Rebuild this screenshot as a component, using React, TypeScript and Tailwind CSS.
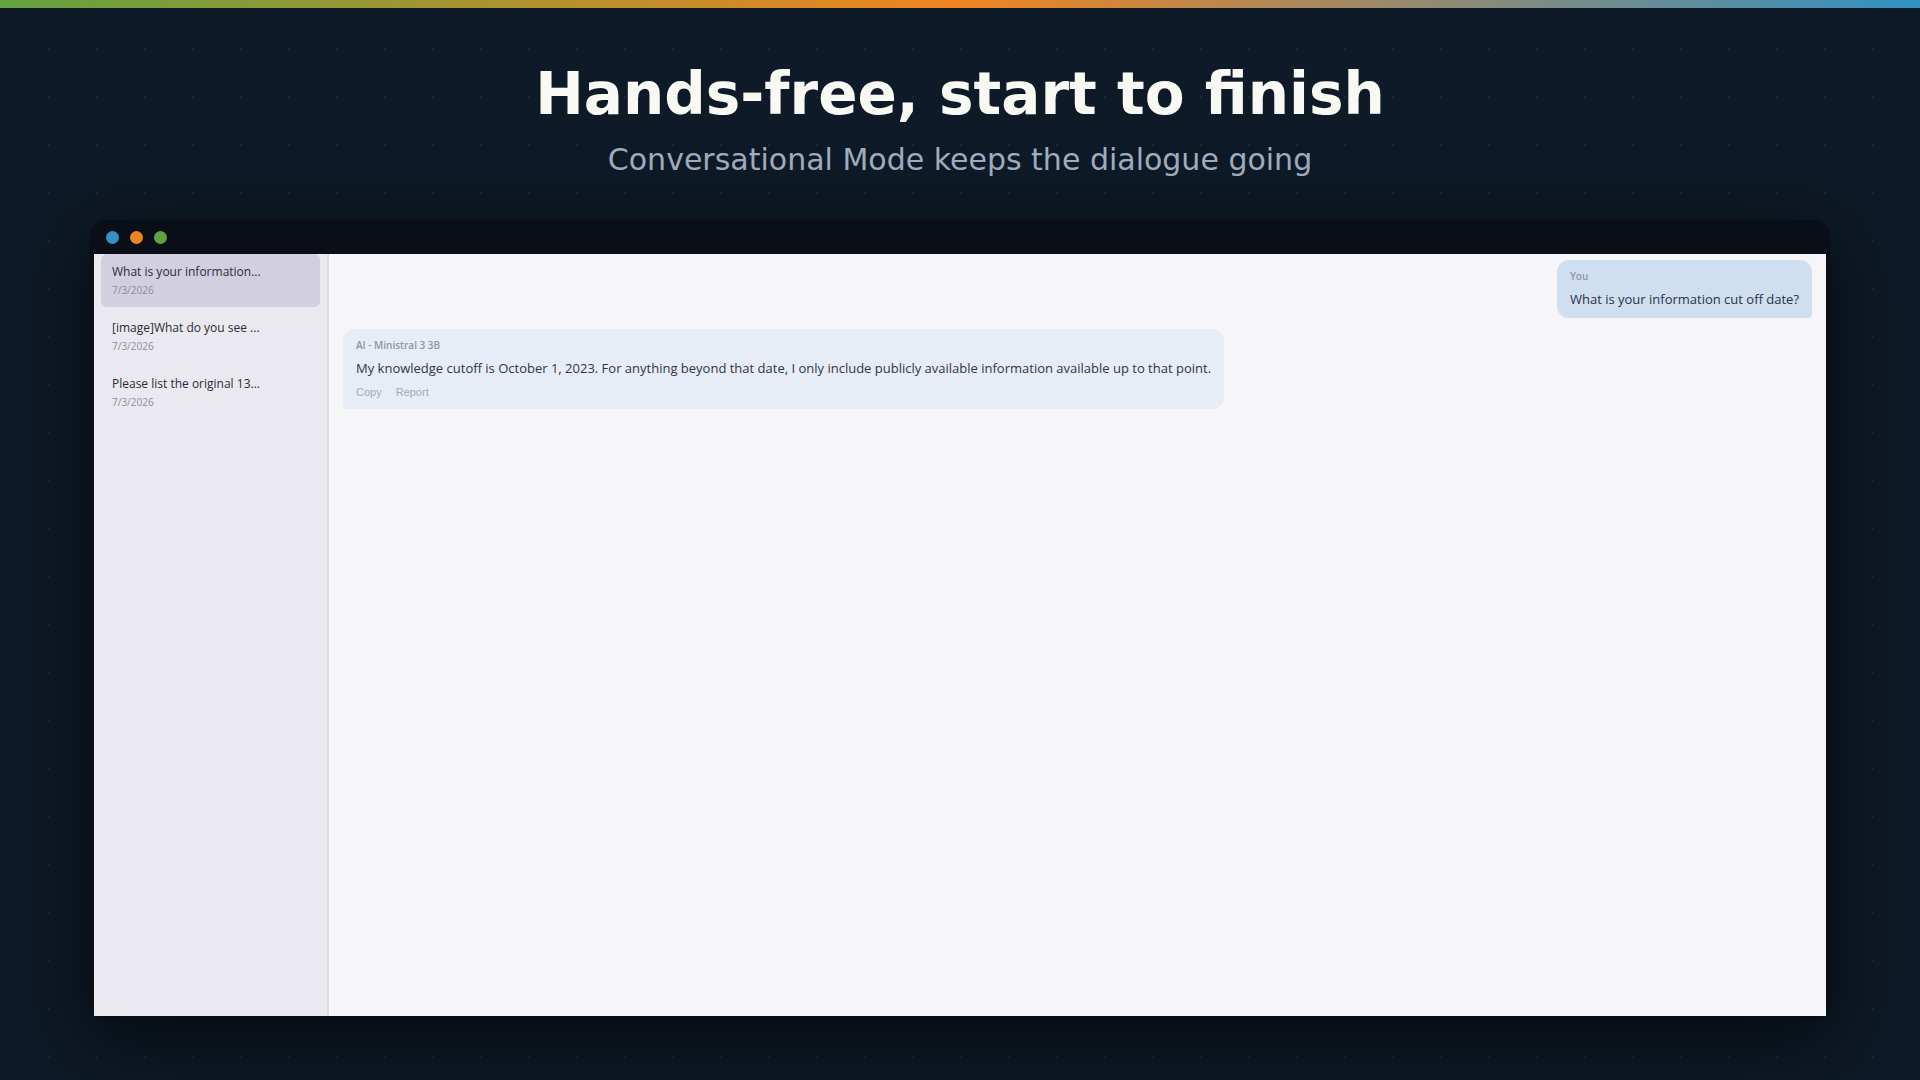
const chats = [
  { title: "What is your information...", date: "7/3/2026", active: true },
  { title: "[image]What do you see ...", date: "7/3/2026", active: false },
  { title: "Please list the original 13...", date: "7/3/2026", active: false },
];

function Sidebar() {
  return (
    <aside className="w-[235px] shrink-0 bg-[#eae9ef] border-r-2 border-[#dcdce4] px-[7px]">
      <nav className="flex flex-col gap-[3px]">
        {chats.map((chat) => (
          <button
            key={chat.title}
            className={`w-full text-left rounded-md px-[11px] pt-2 pb-[9px] ${
              chat.active ? "bg-[#d1cfe0]" : ""
            }`}
          >
            <span className="block text-[12px] leading-5 text-[#2b2b3c] truncate">
              {chat.title}
            </span>
            <span className="block text-[10px] leading-4 text-[#8d8c99]">
              {chat.date}
            </span>
          </button>
        ))}
      </nav>
    </aside>
  );
}

function Conversation() {
  return (
    <main className="flex-1 flex flex-col bg-[#f6f6f9] px-[14px] pt-[6px] gap-[11px]">
      <div className="self-end bg-[#d0dff0] rounded-xl rounded-br-sm px-[13px] py-2">
        <p className="text-[10px] leading-4 font-semibold text-[#8c96a8]">You</p>
        <p className="text-[13px] leading-[22px] text-[#28324a] mt-1">
          What is your information cut off date?
        </p>
      </div>

      <div className="self-start bg-[#e7edf6] rounded-xl rounded-bl-sm px-[13px] py-2">
        <p className="text-[10px] leading-4 font-semibold text-[#8f949f]">
          AI - Ministral 3 3B
        </p>
        <p className="text-[13px] leading-[22px] text-[#303542] mt-1">
          My knowledge cutoff is October 1, 2023. For anything beyond that date, I
          only include publicly available information available up to that point.
        </p>
        <div className="flex gap-[14px] mt-1 font-['Liberation_Sans',sans-serif] text-[11px] leading-[18px] text-[#a5a9b3]">
          <button>Copy</button>
          <button>Report</button>
        </div>
      </div>
    </main>
  );
}

export default function App() {
  return (
    <div className="relative min-h-screen flex flex-col bg-[#0e1a27]">
      {/* faint dot grid */}
      <div className="absolute top-12 left-12 right-0 bottom-0 bg-[radial-gradient(circle_at_1px_1px,#192733_1px,transparent_1px)] bg-size-[48px_48px]" />

      <div className="h-2 bg-linear-to-r/srgb from-[#62a340] via-[#f08421] to-[#3191c4]" />

      <header className="relative text-center font-['DejaVu_Sans',sans-serif] pt-[50px]">
        <h1 className="text-[58px] leading-[72px] font-bold text-[#f7f9f2]">
          Hands-free, start to finish
        </h1>
        <p className="text-[30px] leading-9 text-[#a0aebf] mt-3">
          Conversational Mode keeps the dialogue going
        </p>
      </header>

      <div className="relative flex-1 flex flex-col mt-[42px] mb-[60px] mx-[90px] px-1 pb-1 rounded-2xl bg-[#090e17] shadow-[0_20px_80px_rgba(0,0,0,0.65)]">
        <div className="flex items-center gap-[11px] h-[34px] px-3">
          <span className="size-[13px] rounded-full bg-[#3191c4]" />
          <span className="size-[13px] rounded-full bg-[#f08421]" />
          <span className="size-[13px] rounded-full bg-[#62a340]" />
        </div>
        <div className="flex-1 flex font-['Open_Sans',sans-serif]">
          <Sidebar />
          <Conversation />
        </div>
      </div>
    </div>
  );
}
